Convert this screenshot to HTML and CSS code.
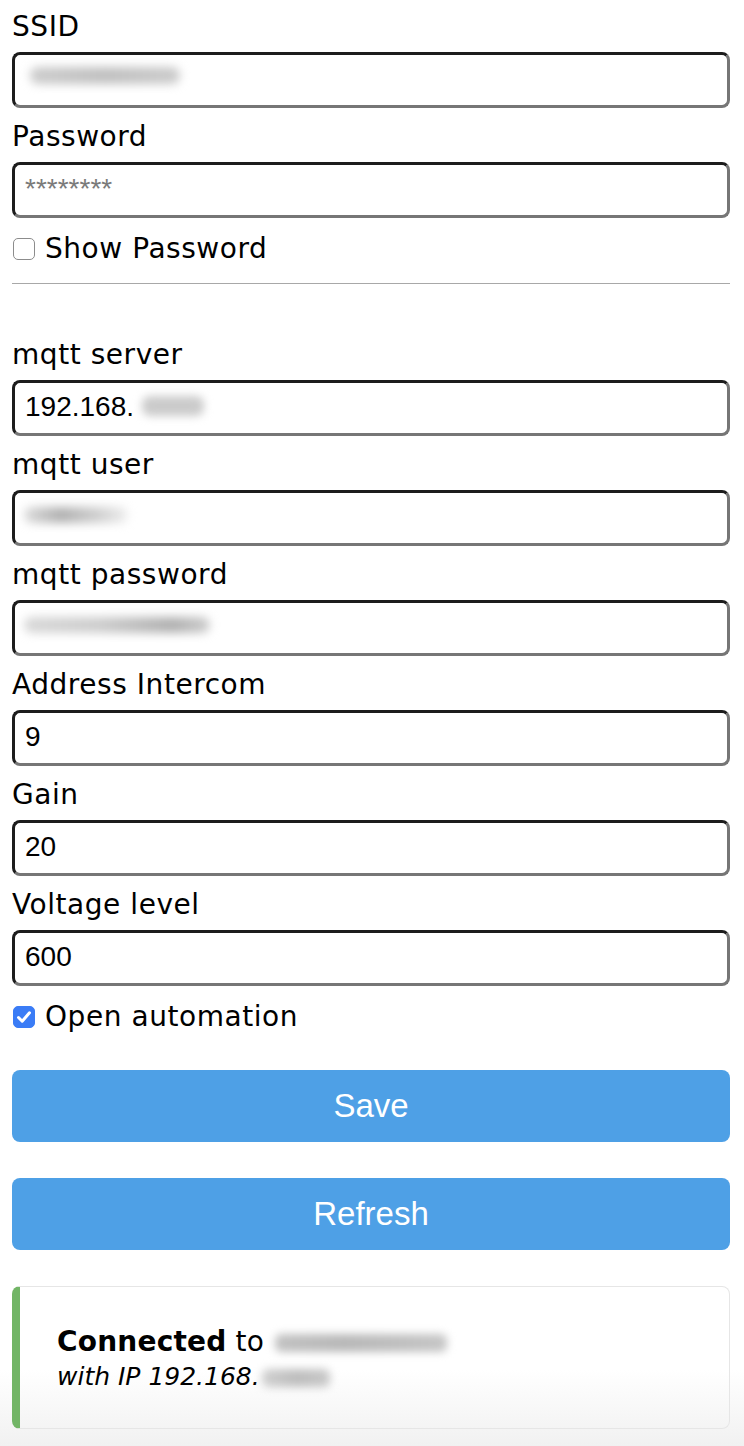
FILE: index.html
```html
<!DOCTYPE html>
<html lang="en">
<head>
<meta charset="utf-8">
<title>Settings</title>
<link rel="stylesheet" href="styles.css">
</head>
<body>
<main class="page">
  <form class="form">
    <div class="field">
      <label class="label" for="ssid">SSID</label>
      <div class="input-wrap">
        <input class="input" id="ssid" type="text" value="">
        <span class="redact r-ssid"></span>
      </div>
    </div>
    <div class="field">
      <label class="label" for="pass">Password</label>
      <div class="input-wrap">
        <input class="input" id="pass" type="password" placeholder="********">
      </div>
    </div>
    <label class="check check-show">
      <span class="box"><input class="box-input" type="checkbox"><svg class="tick" viewBox="0 0 22 22"><path d="M5.5 11.5 L9.2 15.2 L16.5 6.8" fill="none" stroke="#fff" stroke-width="3" stroke-linecap="round" stroke-linejoin="round"/></svg></span>
      <span>Show Password</span>
    </label>
    <hr class="divider">
    <div class="field">
      <label class="label" for="server">mqtt server</label>
      <div class="input-wrap">
        <input class="input" id="server" type="text" value="192.168.">
        <span class="redact r-server"></span>
      </div>
    </div>
    <div class="field">
      <label class="label" for="user">mqtt user</label>
      <div class="input-wrap">
        <input class="input" id="user" type="text" value="">
        <span class="redact r-user"></span>
      </div>
    </div>
    <div class="field">
      <label class="label" for="mpass">mqtt password</label>
      <div class="input-wrap">
        <input class="input" id="mpass" type="text" value="">
        <span class="redact r-mpass"></span>
      </div>
    </div>
    <div class="field">
      <label class="label" for="addr">Address Intercom</label>
      <div class="input-wrap">
        <input class="input" id="addr" type="text" value="9">
      </div>
    </div>
    <div class="field">
      <label class="label" for="gain">Gain</label>
      <div class="input-wrap">
        <input class="input" id="gain" type="text" value="20">
      </div>
    </div>
    <div class="field">
      <label class="label" for="volt">Voltage level</label>
      <div class="input-wrap">
        <input class="input" id="volt" type="text" value="600">
      </div>
    </div>
    <label class="check check-auto">
      <span class="box"><input class="box-input" type="checkbox" checked><svg class="tick" viewBox="0 0 22 22"><path d="M5.5 11.5 L9.2 15.2 L16.5 6.8" fill="none" stroke="#fff" stroke-width="3" stroke-linecap="round" stroke-linejoin="round"/></svg></span>
      <span>Open automation</span>
    </label>
    <button class="btn" type="submit">Save</button>
    <button class="btn" type="button">Refresh</button>
  </form>
  <div class="msg">
    <div class="msg-line"><strong>Connected</strong> to <span class="blur b-ssid"></span></div>
    <div class="msg-sub"><em>with IP 192.168.<span class="blur b-ip"></span></em></div>
  </div>
</main>
</body>
</html>
```

FILE: styles.css
```css
html {
  min-height: 100%;
  background: linear-gradient(to bottom, #ffffff 0, #ffffff 1370px, #f1f1f1 1446px);
}

body {
  margin: 0;
  font-family: "DejaVu Sans", Verdana, sans-serif;
  font-size: 28px;
  color: #000;
}

.page {
  padding: 8px 14px 16px 12px;
}

.form {
  display: flex;
  flex-direction: column;
}

.field {
  display: flex;
  flex-direction: column;
}

.label {
  display: block;
  line-height: 36px;
  padding-top: 1px;
  margin-bottom: -1px;
  letter-spacing: 0.55px;
}

.input-wrap {
  position: relative;
  margin: 8px 0 10px;
}

.input {
  display: block;
  width: 100%;
  height: 56px;
  box-sizing: border-box;
  margin: 0;
  border: 3px solid;
  border-color: #1c1c1c #767676 #767676 #1c1c1c;
  border-radius: 8px;
  padding: 8px 10px 10px;
  font-family: "Liberation Sans", Arial, sans-serif;
  font-size: 28px;
  color: #000;
  background: #fff;
  outline: none;
}

.input::placeholder {
  color: #7a7a7a;
}

.redact {
  position: absolute;
  filter: blur(5px);
  border-radius: 8px;
}

.r-ssid {
  left: 18px;
  top: 15px;
  width: 150px;
  height: 17px;
  background: linear-gradient(to right, #cccccc, #c0c0c0 50%, #cbcbcb);
}

.r-server {
  left: 130px;
  top: 16px;
  width: 62px;
  height: 20px;
  background: #cbcbcb;
  filter: blur(4px);
}

.r-user {
  left: 12px;
  top: 17px;
  width: 104px;
  height: 16px;
  background: linear-gradient(to right, #dcdcdc, #b0b0b0 35%, #cecece 70%, #efefef);
}

.r-mpass {
  left: 12px;
  top: 17px;
  width: 186px;
  height: 16px;
  background: linear-gradient(to right, #d8d8d8, #cdcdcd 40%, #b0b0b0 80%, #cdcdcd);
}

.check {
  display: flex;
  align-items: center;
  line-height: 36px;
  gap: 10px;
  padding-left: 1px;
  letter-spacing: 0.55px;
}

.check-show {
  margin-top: 3px;
  margin-bottom: -1px;
}

.check-auto {
  margin-top: 3px;
  margin-bottom: -1px;
}

.box {
  position: relative;
  width: 22px;
  height: 22px;
  flex: none;
}

.box-input {
  appearance: none;
  -webkit-appearance: none;
  display: block;
  margin: 0;
  width: 22px;
  height: 22px;
  box-sizing: border-box;
  border: 1.5px solid #8c8c8c;
  border-radius: 5px;
  background: #fff;
}

.box-input:checked {
  background: #3a7cf6;
  border-color: #3a7cf6;
}

.tick {
  position: absolute;
  left: 0;
  top: 0;
  width: 22px;
  height: 22px;
  display: none;
  pointer-events: none;
}

.box-input:checked + .tick {
  display: block;
}

.divider {
  border: 0;
  border-top: 1px solid #a8a8a8;
  margin: 17px 0 52px;
  height: 0;
}

.btn {
  display: block;
  width: 100%;
  height: 72px;
  margin: 36px 0 0;
  border: 0;
  border-radius: 8px;
  background: #4ea0e6;
  color: #fff;
  font-family: "Liberation Sans", Arial, sans-serif;
  font-size: 33px;
  padding: 0;
}

.msg {
  margin-top: 36px;
  border: 1px solid #e6e6e6;
  border-left: 8px solid #72b566;
  border-radius: 8px;
  padding: 38px 30px 33px 37px;
}

.msg-line {
  line-height: 34px;
  letter-spacing: 0.2px;
}

.msg-sub {
  font-size: 25px;
  line-height: 36px;
}

.blur {
  display: inline-block;
  vertical-align: middle;
  filter: blur(4px);
  border-radius: 6px;
}

.b-ssid {
  width: 172px;
  height: 18px;
  margin-left: 2px;
  background: linear-gradient(to right, #c2c2c2, #b8b8b8 40%, #c6c6c6);
}

.b-ip {
  width: 68px;
  height: 18px;
  margin-left: 2px;
  background: linear-gradient(to right, #d0d0d0, #bebebe 50%, #c8c8c8);
}
```
